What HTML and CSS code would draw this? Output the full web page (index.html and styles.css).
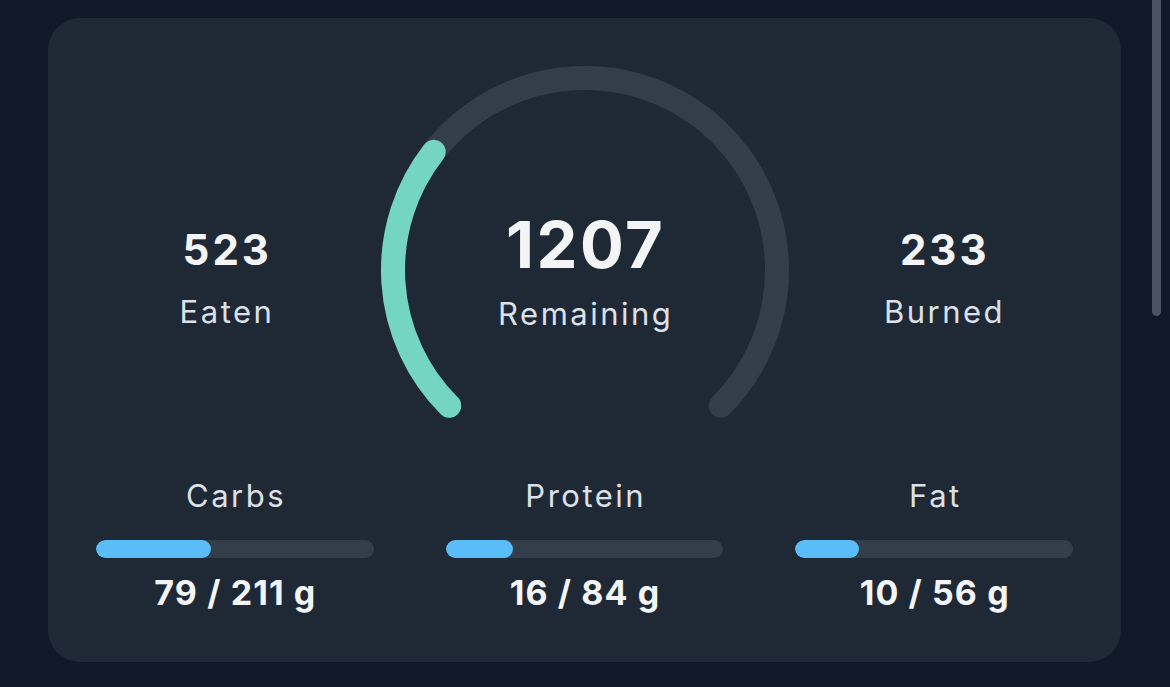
FILE: index.html
```html
<!DOCTYPE html>
<html lang="en">
<head>
<meta charset="utf-8">
<title>Calories</title>
<link rel="stylesheet" href="styles.css">
</head>
<body>
<div class="page">
  <section class="card">
    <div class="summary">
      <div class="stat">
        <div class="stat-value">523</div>
        <div class="stat-label">Eaten</div>
      </div>
      <div class="gauge">
        <svg class="gauge-svg" width="410" height="356" viewBox="0 0 410 356">
          <path class="gauge-track" d="M 69.24 340.76 A 192 192 0 1 1 340.76 340.76"/>
          <path class="gauge-fill" d="M 69.24 340.76 A 192 192 0 0 1 53.7 86.8"/>
        </svg>
        <div class="gauge-center">
          <div class="gauge-value">1207</div>
          <div class="stat-label">Remaining</div>
        </div>
      </div>
      <div class="stat">
        <div class="stat-value">233</div>
        <div class="stat-label">Burned</div>
      </div>
    </div>
    <div class="macros">
      <div class="macro">
        <div class="macro-label">Carbs</div>
        <div class="bar"><div class="bar-fill" style="width:41.4%"></div></div>
        <div class="macro-value">79 / 211 g</div>
      </div>
      <div class="macro">
        <div class="macro-label">Protein</div>
        <div class="bar"><div class="bar-fill" style="width:24.1%"></div></div>
        <div class="macro-value">16 / 84 g</div>
      </div>
      <div class="macro">
        <div class="macro-label">Fat</div>
        <div class="bar"><div class="bar-fill" style="width:23%"></div></div>
        <div class="macro-value">10 / 56 g</div>
      </div>
    </div>
  </section>
</div>
<div class="scroll-thumb"></div>
</body>
</html>
```
FILE: styles.css
```css
html, body {
  margin: 0;
  padding: 0;
  background: #111827;
  height: 100%;
  overflow: hidden;
}
body {
  font-family: Inter, "Liberation Sans", sans-serif;
  color: #f3f4f6;
}
.page {
  padding: 18px 49px 25px 48px;
}
.card {
  background: #1f2936;
  border-radius: 32px;
  padding: 47px 48px 49px 48px;
}
.summary {
  display: grid;
  grid-template-columns: 1fr 410px 1fr;
  column-gap: 24px;
}
.stat {
  display: flex;
  flex-direction: column;
  align-items: center;
  padding-top: 161px;
}
.stat-value {
  font-size: 42px;
  line-height: 48px;
  font-weight: 700;
  color: #f3f4f6;
  letter-spacing: 3px;
  margin-right: -3px;
}
.stat-label {
  font-size: 31px;
  line-height: 36px;
  font-weight: 400;
  color: #dde1e7;
  margin-top: 20px;
  letter-spacing: 2.5px;
  margin-right: -2.5px;
}
.gauge {
  position: relative;
  height: 356px;
}
.gauge-svg {
  display: block;
}
.gauge-track {
  fill: none;
  stroke: #343d4a;
  stroke-width: 24;
  stroke-linecap: round;
}
.gauge-fill {
  fill: none;
  stroke: #74d5c2;
  stroke-width: 24;
  stroke-linecap: round;
}
.gauge-center {
  position: absolute;
  left: 0;
  right: 0;
  top: 144px;
  display: flex;
  flex-direction: column;
  align-items: center;
}
.gauge-value {
  font-size: 65px;
  line-height: 72px;
  font-weight: 700;
  color: #f3f4f6;
  letter-spacing: 2.5px;
  margin-right: -2.5px;
}
.gauge-center .stat-label {
  margin-top: 15px;
}
.macros {
  display: grid;
  grid-template-columns: repeat(3, 1fr);
  column-gap: 72px;
  margin-top: 57px;
}
.macro {
  display: flex;
  flex-direction: column;
  align-items: center;
}
.macro-label {
  font-size: 31px;
  line-height: 36px;
  color: #dde1e7;
  letter-spacing: 2.5px;
  margin-right: -2.5px;
}
.bar {
  align-self: stretch;
  height: 18px;
  border-radius: 9px;
  background: #343d4a;
  margin-top: 26px;
  overflow: hidden;
}
.bar-fill {
  height: 100%;
  border-radius: 9px;
  background: #5bbdf7;
}
.macro-value {
  font-size: 34px;
  line-height: 40px;
  font-weight: 700;
  color: #f3f4f6;
  margin-top: 15px;
  letter-spacing: 1.1px;
  margin-right: -1.1px;
}
.scroll-thumb {
  position: absolute;
  left: 1152px;
  top: -10px;
  width: 9px;
  height: 326px;
  border-radius: 5px;
  background: #4b5262;
}
```
